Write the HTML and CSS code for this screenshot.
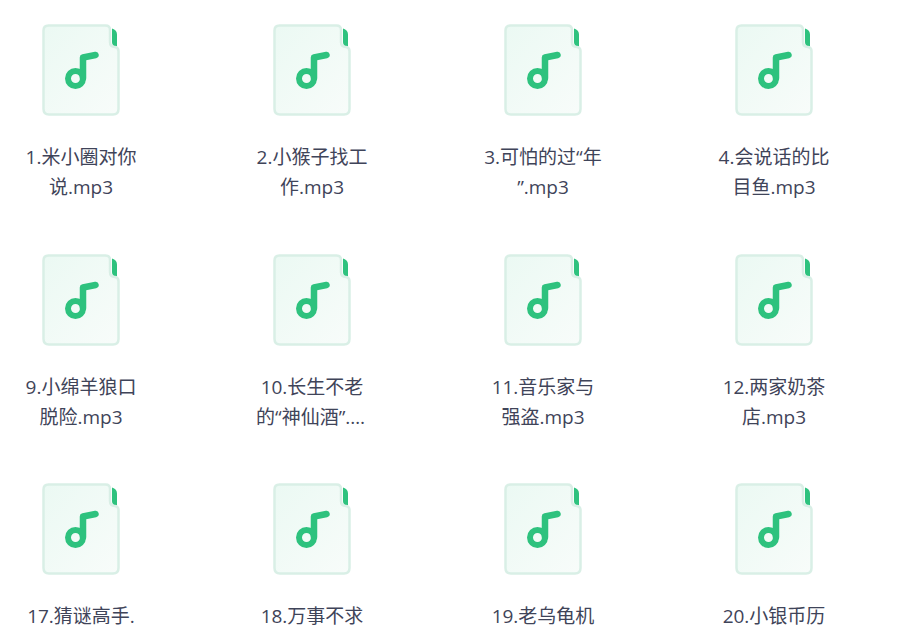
FILE: index.html
```html
<!DOCTYPE html>
<html lang="en">
<head>
  <meta charset="UTF-8" />
  <title>Files</title>
  <link rel="stylesheet" href="styles.css">
</head>
<body>

  <svg class="defs" width="0" height="0" aria-hidden="true">
    <defs>
      <linearGradient id="paper" x1="0" y1="0" x2="1" y2="1">
        <stop offset="0" stop-color="#ebf9f3"/>
        <stop offset="1" stop-color="#f8fcfa"/>
      </linearGradient>
      <symbol id="audio" viewBox="0 0 78 92">
        <path d="M70 4.500Q75 6 75 10.500V22.500H73Q70 21 70 18Z" fill="#2ec27e"/>
        <path d="M6.500 1.500H63.500Q68 1.500 68 6V18Q68 23 73 23Q76.500 23.500 76.500 27V85Q76.500 90.500 71 90.500H7Q1.500 90.500 1.500 85V6.500Q1.500 1.500 6.500 1.500Z" fill="url(#paper)" stroke="#d9efe6" stroke-width="2.500"/>
        <path d="M41 54V33.500L53.500 31" fill="none" stroke="#2ec27e" stroke-width="6.500" stroke-linecap="round" stroke-linejoin="round"/>
        <circle cx="33.500" cy="54.500" r="7.500" fill="none" stroke="#2ec27e" stroke-width="6"/>
      </symbol>
    </defs>
  </svg>

  <!-- File grid -->
  <div class="file-grid">
    <div class="file-item">
      <svg class="file-icon"><use href="#audio"/></svg>
      <p class="file-name">1.米小圈对你说.mp3</p>
    </div>
    <div class="file-item">
      <svg class="file-icon"><use href="#audio"/></svg>
      <p class="file-name">2.小猴子找工作.mp3</p>
    </div>
    <div class="file-item">
      <svg class="file-icon"><use href="#audio"/></svg>
      <p class="file-name">3.可怕的过“年”.mp3</p>
    </div>
    <div class="file-item">
      <svg class="file-icon"><use href="#audio"/></svg>
      <p class="file-name">4.会说话的比目鱼.mp3</p>
    </div>
    <div class="file-item">
      <svg class="file-icon"><use href="#audio"/></svg>
      <p class="file-name">9.小绵羊狼口脱险.mp3</p>
    </div>
    <div class="file-item">
      <svg class="file-icon"><use href="#audio"/></svg>
      <p class="file-name">10.长生不老的“神仙酒”.mp3</p>
    </div>
    <div class="file-item">
      <svg class="file-icon"><use href="#audio"/></svg>
      <p class="file-name">11.音乐家与强盗.mp3</p>
    </div>
    <div class="file-item">
      <svg class="file-icon"><use href="#audio"/></svg>
      <p class="file-name">12.两家奶茶店.mp3</p>
    </div>
    <div class="file-item">
      <svg class="file-icon"><use href="#audio"/></svg>
      <p class="file-name">17.猜谜高手.mp3</p>
    </div>
    <div class="file-item">
      <svg class="file-icon"><use href="#audio"/></svg>
      <p class="file-name">18.万事不求人.mp3</p>
    </div>
    <div class="file-item">
      <svg class="file-icon"><use href="#audio"/></svg>
      <p class="file-name">19.老乌龟机智.mp3</p>
    </div>
    <div class="file-item">
      <svg class="file-icon"><use href="#audio"/></svg>
      <p class="file-name">20.小银币历险.mp3</p>
    </div>
  </div>

</body>
</html>
```

FILE: styles.css
```css
html, body {
  height: 100%;
  overflow: hidden;
}

body {
  margin: 0;
  font-family: "Open Sans", "Noto Sans CJK SC", sans-serif;
  background-color: #fff;
}

.defs {
  display: block;
}

/* File grid */
.file-grid {
  display: grid;
  grid-template-columns: repeat(4, 231px);
  grid-auto-rows: 229.5px;
  padding: 24px 0 0 0;
}

.file-item {
  display: flex;
  flex-direction: column;
  align-items: center;
  width: 162px;
}

.file-icon {
  width: 78px;
  height: 92px;
  flex-shrink: 0;
}

.file-name {
  width: 119px;
  margin: 26px 0 0;
  font-size: 19px;
  line-height: 30px;
  color: #3f4459;
  text-align: center;
  word-break: break-all;
  line-break: anywhere;
  display: -webkit-box;
  -webkit-box-orient: vertical;
  -webkit-line-clamp: 2;
  overflow: hidden;
}
```
